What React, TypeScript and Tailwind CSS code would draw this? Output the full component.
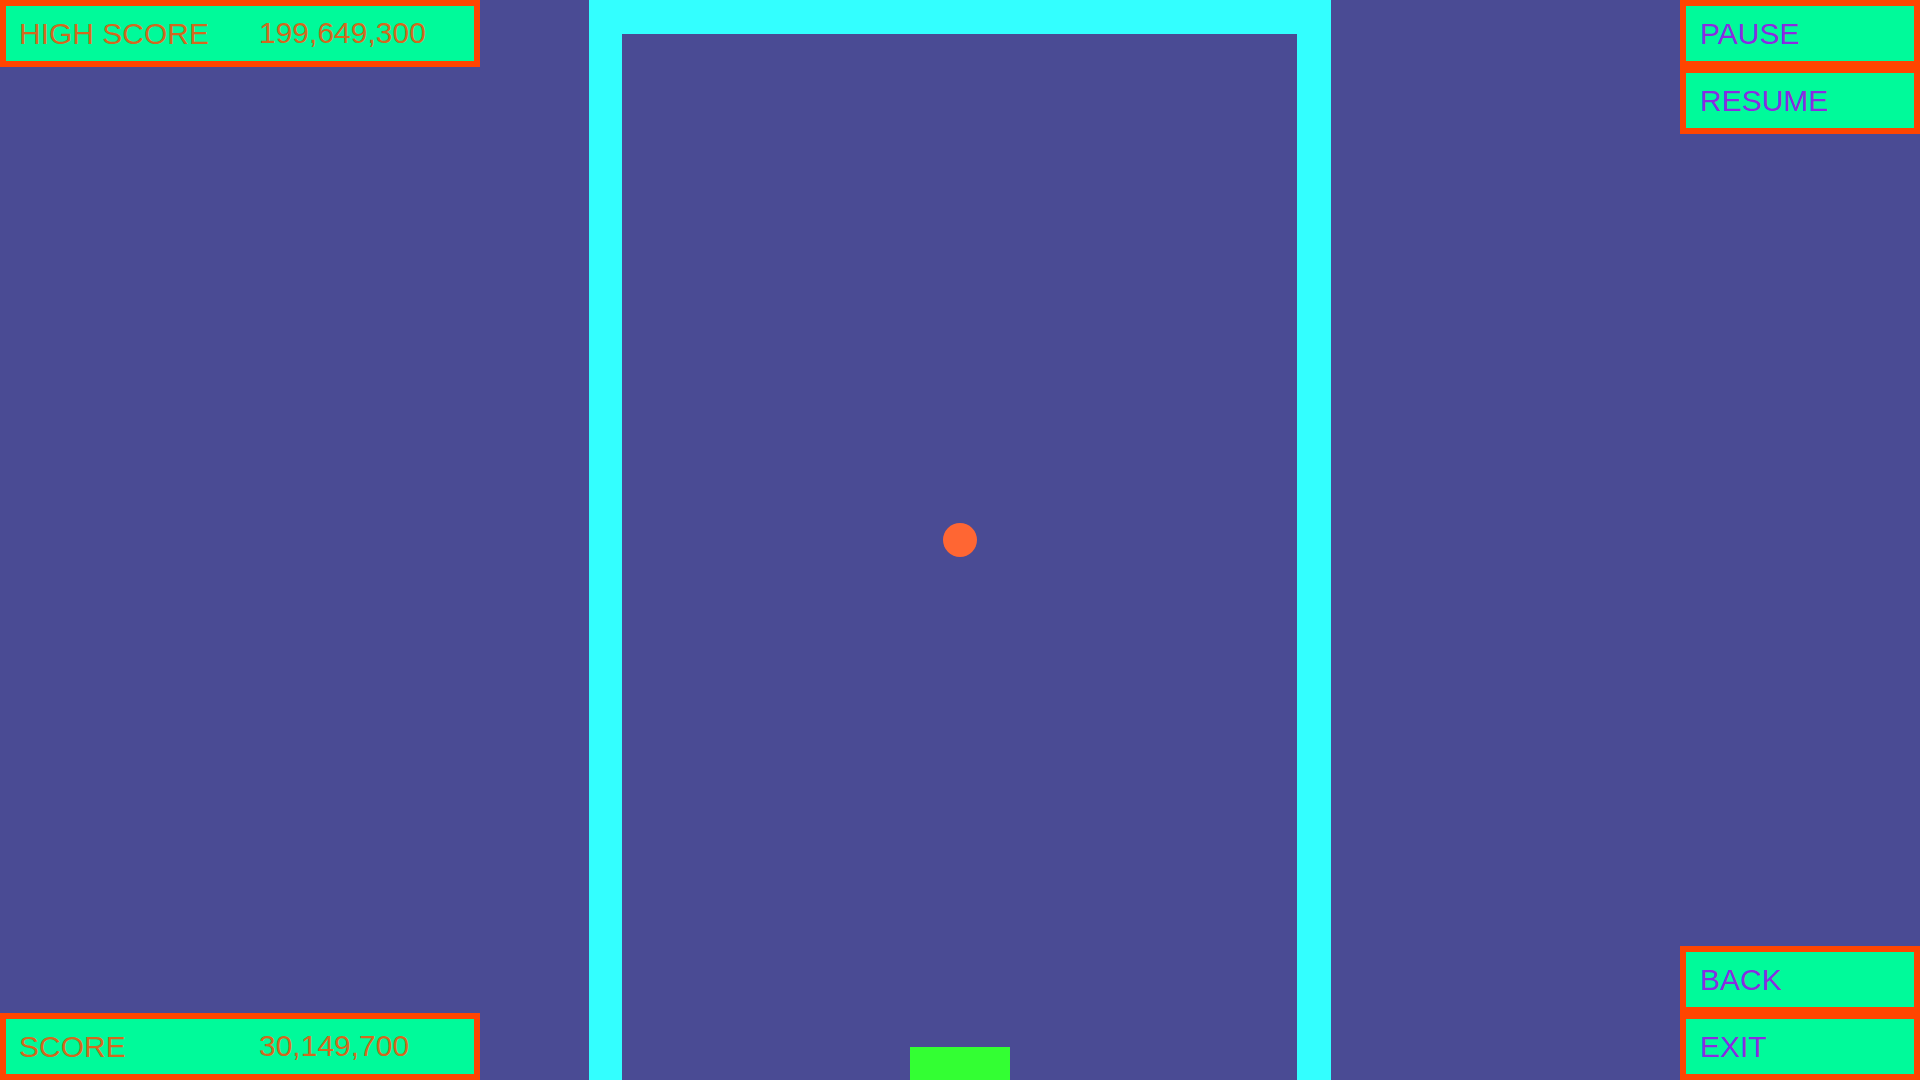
import React from "react";

// Score panel on the left side: label on the left half, number on the right half
const ScoreBox: React.FC<{ label: string; value: string }> = ({ label, value }) => (
  <div className="h-[67px] w-[480px] border-[6px] border-[#ff4500] bg-[#00fa9a] flex items-center text-[30px] text-[#d2691e]">
    <div className="w-[234px] pl-[13px]">{label}</div>
    <div className="pl-[19px] -mt-[2px]">{value}</div>
  </div>
);

// Menu buttons on the right side
const MenuButton: React.FC<{ label: string }> = ({ label }) => (
  <button className="h-[67px] w-[240px] border-[6px] border-[#ff4500] bg-[#00fa9a] flex items-center pl-[14px] text-[30px] text-[#8a2be2] text-left">
    {label}
  </button>
);

const App: React.FC = () => {
  return (
    <div
      className="w-[1920px] h-[1080px] bg-[#4a4b94] flex overflow-hidden"
      style={{ fontFamily: '"Liberation Sans", Arial, sans-serif' }}
    >
      {/* Left column: scores */}
      <div className="w-[480px] h-full flex flex-col justify-between">
        <ScoreBox label="HIGH SCORE" value="199,649,300" />
        <ScoreBox label="SCORE" value="30,149,700" />
      </div>

      {/* Game field */}
      <div className="ml-[109px] w-[742px] h-full border-l-[33px] border-r-[34px] border-t-[34px] border-[#33ffff]">
        <div className="relative w-full h-full">
          {/* ball */}
          <div className="absolute left-[321px] top-[489px] w-[34px] h-[34px] rounded-full bg-[#ff6633]" />
          {/* paddle */}
          <div className="absolute left-[288px] bottom-0 w-[100px] h-[33px] bg-[#33ff33]" />
        </div>
      </div>

      {/* Right column: controls */}
      <div className="ml-auto w-[240px] h-full flex flex-col justify-between">
        <div className="flex flex-col">
          <MenuButton label="PAUSE" />
          <MenuButton label="RESUME" />
        </div>
        <div className="flex flex-col">
          <MenuButton label="BACK" />
          <MenuButton label="EXIT" />
        </div>
      </div>
    </div>
  );
};

export default App;
